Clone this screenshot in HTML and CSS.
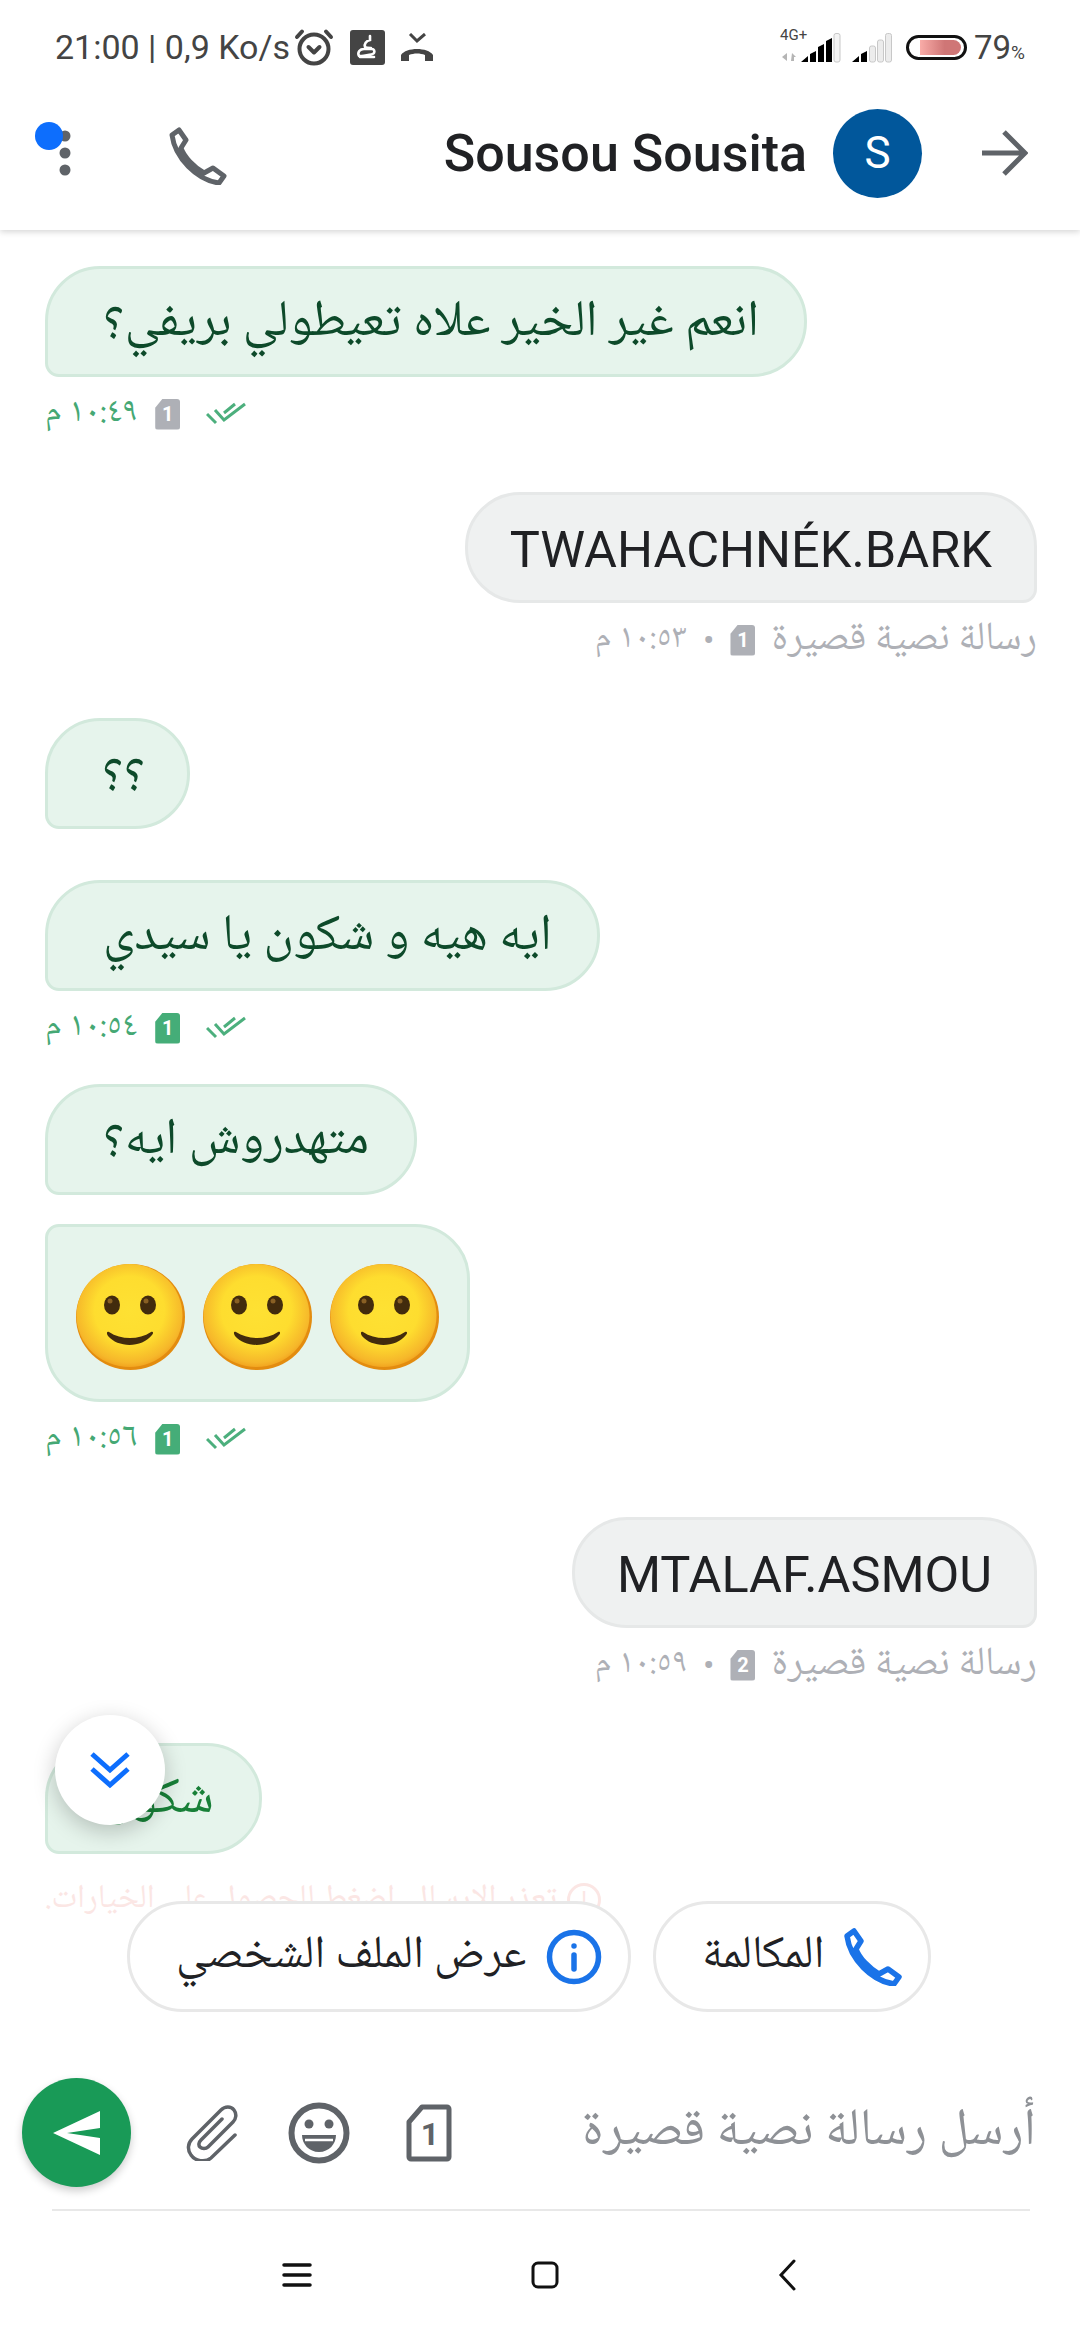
FILE: index.html
```html
<!DOCTYPE html>
<html lang="en">
<head>
    <meta charset="UTF-8">
    <meta name="viewport" content="width=device-width, initial-scale=1.0">
    <title>Sousou Sousita</title>
    <link rel="stylesheet" href="styles.css">
</head>
<body>
<div class="phone">

    <div class="status-bar">
        <span class="clock">21:00 | 0,9 Ko/s</span>
        <svg class="st-alarm" width="42" height="38" viewBox="0 0 42 38" fill="none" stroke="#444" stroke-width="4" stroke-linecap="round" stroke-linejoin="round">
            <circle cx="21" cy="21" r="14.5"/>
            <path d="M4 9 9 3.5M38 9 33 3.5"/>
            <path d="M15.5 19 21 24.5 26.5 19"/>
        </svg>
        <svg class="st-app" width="35" height="35" viewBox="0 0 35 35">
            <rect width="35" height="35" rx="3" fill="#444"/>
            <path d="M20 6v4c-4 1-6 4-5 7 1 1 4 1 6 1M9 26c-2-4 1-7 5-7h8c2 0 3 2 2 4-1 2-8 2-12 3-1 0-2 0-3 0M10 27h14" fill="none" stroke="#fff" stroke-width="2.6" stroke-linecap="round"/>
        </svg>
        <svg class="st-call" width="32" height="29" viewBox="0 0 32 29" fill="none">
            <path d="M9 1 16 8 24 1" stroke="#444" stroke-width="3"/>
            <path d="M0 28v-6c5-8 27-8 32 0v6h-8v-6c-5-2-11-2-16 0v6z" fill="#444"/>
        </svg>
        <span class="status-gap"></span>
        <span class="net">
            <span class="net-label">4G+</span>
            <svg width="60" height="31" viewBox="0 0 60 31">
                <path d="M1 25 6 21v8zM11 21l4 4h-2v4h-3zM8 29v-8" fill="#b5b5b5"/>
                <path d="M20 30l7-6v6zM29 22l6-3v11h-6zM37 15l6-3v18h-6zM45 9l6-3v24h-6z" fill="#000"/>
                <rect x="53" y="1.5" width="6" height="28.5" rx="2" fill="#f4f4f4" stroke="#c8c8c8"/>
            </svg>
        </span>
        <svg class="st-signal" width="43" height="31" viewBox="0 0 43 31">
            <path d="M1 30l7-6v6zM10 22l6-3v11h-6z" fill="#000"/>
            <g fill="#ececec" stroke="#c8c8c8">
                <rect x="18.500" y="14" width="6" height="16" rx="2"/>
                <rect x="26.500" y="8" width="6" height="22" rx="2"/>
                <rect x="34.500" y="1.5" width="6" height="28.5" rx="2"/>
            </g>
        </svg>
        <span class="battery"><span class="battery-fill"></span></span>
        <span class="battery-num">79<small>%</small></span>
    </div>

    <div class="app-bar">
        <svg class="ab-dots" width="52" height="56" viewBox="0 0 52 56">
            <circle cx="30" cy="14" r="5.500" fill="#5f6368"/>
            <circle cx="30" cy="31" r="5.500" fill="#5f6368"/>
            <circle cx="30" cy="48" r="5.500" fill="#5f6368"/>
            <circle cx="14" cy="14" r="14" fill="#0d6efd"/>
        </svg>
        <svg class="ab-phone" width="58" height="58" viewBox="0 0 58 58" fill="none" stroke="#5f6368" stroke-width="5" stroke-linejoin="round">
            <path d="M10 3 17 13 12 21C15 30 25 40 35 46L44 41 55 49 50 56C28 53 6 31 3 8Z"/>
        </svg>
        <span class="title">Sousou Sousita</span>
        <span class="avatar">S</span>
        <svg class="ab-arrow" width="46" height="46" viewBox="0 0 46 46" fill="none" stroke="#5f6368" stroke-width="5">
            <path d="M0 23H43M22 2 43 23 22 44"/>
        </svg>
    </div>

    <div class="thread">
        <div class="bubble in" dir="rtl">انعم غير الخير علاه تعيطولي بريفي؟</div>
        <div class="meta meta-in" dir="rtl">
            <svg class="ticks" width="40" height="24" viewBox="0 0 40 24" fill="none" stroke="#4caf7d" stroke-width="3"><path d="M1 12 10 21M9 8 18 18 39 2M18 11 29 2"/></svg>
            <span class="sim sim-grey">1</span>
            <span class="time">١٠:٤٩ م</span>
        </div>

        <div class="bubble out" dir="ltr">TWAHACHNÉK.BARK</div>
        <div class="meta meta-out" dir="rtl">
            <span>رسالة نصية قصيرة</span>
            <span class="sim sim-grey">1</span>
            <span class="dot">•</span>
            <span class="time">١٠:٥٣ م</span>
        </div>

        <div class="bubble in tight" dir="rtl">؟؟</div>
        <div class="bubble in gap-51" dir="rtl">ايه هيه و شكون يا سيدي</div>
        <div class="meta meta-in" dir="rtl">
            <svg class="ticks" width="40" height="24" viewBox="0 0 40 24" fill="none" stroke="#4caf7d" stroke-width="3"><path d="M1 12 10 21M9 8 18 18 39 2M18 11 29 2"/></svg>
            <span class="sim sim-green">1</span>
            <span class="time">١٠:٥٤ م</span>
        </div>

        <div class="bubble in gap-37" dir="rtl">متهدروش ايه؟</div>
        <div class="bubble in emoji-bubble">
            <svg class="emoji" width="109" height="106" viewBox="0 0 109 106"><use href="#smile"/></svg>
            <svg class="emoji" width="109" height="106" viewBox="0 0 109 106"><use href="#smile"/></svg>
            <svg class="emoji" width="109" height="106" viewBox="0 0 109 106"><use href="#smile"/></svg>
        </div>
        <div class="meta meta-in" dir="rtl">
            <svg class="ticks" width="40" height="24" viewBox="0 0 40 24" fill="none" stroke="#4caf7d" stroke-width="3"><path d="M1 12 10 21M9 8 18 18 39 2M18 11 29 2"/></svg>
            <span class="sim sim-green">1</span>
            <span class="time">١٠:٥٦ م</span>
        </div>

        <div class="bubble out" dir="ltr">MTALAF.ASMOU</div>
        <div class="meta meta-out" dir="rtl">
            <span>رسالة نصية قصيرة</span>
            <span class="sim sim-grey">2</span>
            <span class="dot">•</span>
            <span class="time">١٠:٥٩ م</span>
        </div>

        <div class="bubble in sending" dir="rtl">شكون</div>
        <div class="failed" dir="rtl">
            <span class="failed-icon">!</span>
            <span>تعذر الإرسال. اضغط للحصول على الخيارات.</span>
        </div>

        <div class="scroll-down">
            <svg width="40" height="38" viewBox="0 0 40 38" fill="none" stroke="#0d6efd" stroke-width="5"><path d="M2 3 20 19 38 3M2 18 20 34 38 18"/></svg>
        </div>

        <div class="chips">
            <div class="chip" dir="rtl">
                <svg width="58" height="58" viewBox="0 0 58 58" fill="none" stroke="#1a73e8" stroke-width="5.500" stroke-linejoin="round">
                    <path d="M10 3 17 13 12 21C15 30 25 40 35 46L44 41 55 49 50 56C28 53 6 31 3 8Z"/>
                </svg>
                <span>المكالمة</span>
            </div>
            <div class="chip" dir="rtl">
                <svg width="56" height="56" viewBox="0 0 56 56" fill="none" stroke="#1a73e8" stroke-width="5.500" stroke-linecap="round">
                    <circle cx="28" cy="28" r="24.500"/>
                    <path d="M28 26V40"/>
                    <circle cx="28" cy="17" r="1.500" fill="#1a73e8" stroke-width="2.500"/>
                </svg>
                <span>عرض الملف الشخصي</span>
            </div>
        </div>
    </div>

    <div class="composer">
        <span class="send">
            <svg width="47" height="44" viewBox="0 0 47 44"><path d="M0 22 47 0V17L14 22 47 27V44Z" fill="#fff"/></svg>
        </span>
        <svg class="c-clip" width="52" height="56" viewBox="0 0 52 56" fill="none" stroke="#5f6368" stroke-width="3.500" stroke-linecap="round">
            <path d="M49 30 25 53C19 58 9 56 5 50 1 45 2 38 6 34L35 5C39 1 45 1 48 5 51 9 50 14 47 17L22 42C20 44 16 44 14 42 12 40 13 37 15 35L36 14"/>
        </svg>
        <svg class="c-smile" width="62" height="62" viewBox="0 0 62 62">
            <circle cx="31" cy="31" r="27.500" fill="none" stroke="#5f6368" stroke-width="6"/>
            <circle cx="21" cy="22" r="4.500" fill="#5f6368"/>
            <circle cx="41" cy="22" r="4.500" fill="#5f6368"/>
            <path d="M14 33H48C48 42 41 50 31 50 21 50 14 42 14 33Z" fill="#5f6368"/>
            <path d="M17 38H45" stroke="#fff" stroke-width="2.500"/>
        </svg>
        <svg class="c-sim" width="46" height="58" viewBox="0 0 46 58">
            <path d="M16 3H41C42 3 43 4 43 5V53C43 54 42 55 41 55H5C4 55 3 54 3 53V18Z" fill="none" stroke="#5f6368" stroke-width="5" stroke-linejoin="round"/>
            <text x="24" y="41" class="c-sim-num">1</text>
        </svg>
        <span class="placeholder" dir="rtl">أرسل رسالة نصية قصيرة</span>
    </div>

    <div class="nav-bar">
        <svg width="30" height="24" viewBox="0 0 30 24" stroke="#111" stroke-width="3.500" stroke-linecap="round"><path d="M2 2H28M2 12H28M2 22H28"/></svg>
        <svg width="28" height="28" viewBox="0 0 28 28" fill="none" stroke="#111" stroke-width="3"><rect x="2" y="2" width="24" height="24" rx="5"/></svg>
        <svg width="20" height="32" viewBox="0 0 20 32" fill="none" stroke="#111" stroke-width="3" stroke-linecap="round"><path d="M16 2 3 16 16 30"/></svg>
    </div>

    <svg width="0" height="0" class="defs">
        <defs>
            <radialGradient id="face" cx="50%" cy="45%" r="55%">
                <stop offset="0" stop-color="#fee133"/>
                <stop offset="0.6" stop-color="#fedd2f"/>
                <stop offset="0.92" stop-color="#f6b72a"/>
                <stop offset="1" stop-color="#f2a520"/>
            </radialGradient>
            <g id="smile">
                <ellipse cx="54.500" cy="53" rx="54.500" ry="53" fill="#e38c0f"/>
                <ellipse cx="53.500" cy="51.500" rx="53" ry="51.500" fill="url(#face)"/>
                <ellipse cx="36" cy="41" rx="8" ry="9.500" fill="#422b0d"/>
                <ellipse cx="72" cy="41" rx="8" ry="9.500" fill="#422b0d"/>
                <circle cx="34" cy="37" r="2.500" fill="#896024"/>
                <circle cx="70" cy="37" r="2.500" fill="#896024"/>
                <path d="M33 68C45 76 63 76 75 68 77 67 78 69 76 71 66 84 42 84 32 72 30 69 31 67 33 68Z" fill="#422b0d"/>
            </g>
        </defs>
    </svg>
</div>
</body>
</html>
```

FILE: styles.css
```css
* {
    box-sizing: border-box;
}

body {
    margin: 0;
    background-color: white;
    font-family: Roboto, "Noto Sans", "DejaVu Sans", sans-serif;
    color: #202124;
}

.phone {
    width: 1080px;
    height: 2340px;
    display: flex;
    flex-direction: column;
    overflow: hidden;
}

.defs {
    position: absolute;
}

/* status bar */
.status-bar {
    height: 82px;
    flex: none;
    display: flex;
    align-items: center;
    padding: 12px 55px 0 55px;
    background-color: white;
    color: #444;
    position: relative;
    z-index: 3;
}

.clock {
    font-size: 34px;
    width: 238px;
    white-space: nowrap;
}

.st-app {
    margin-left: 15px;
}

.st-call {
    margin-left: 16px;
}

.status-gap {
    flex: 1;
}

.net {
    position: relative;
    display: flex;
}

.net-label {
    position: absolute;
    left: -1px;
    top: -6px;
    font-size: 15px;
    color: #444;
}

.st-signal {
    margin-left: 10px;
}

.battery {
    width: 61px;
    height: 25px;
    margin-left: 12px;
    border: 3.5px solid #111;
    border-radius: 13px;
    padding: 2px 3px 2px 11px;
    display: flex;
}

.battery-fill {
    flex: 1;
    border-radius: 0 8px 8px 0;
    background: linear-gradient(to right, #f9aca8, #cf7676 60%);
}

.battery-num {
    margin-left: 7px;
    font-size: 33px;
}

.battery-num small {
    font-size: 19px;
}

/* app bar */
.app-bar {
    height: 148px;
    flex: none;
    display: flex;
    align-items: center;
    padding: 0 52px 6px 35px;
    background-color: white;
    box-shadow: 0 2px 6px rgba(0, 0, 0, 0.16);
    position: relative;
    z-index: 2;
}

.ab-dots {
    margin-top: -6px;
}

.ab-phone {
    margin-left: 82px;
    margin-top: 6px;
}

.title {
    margin-left: auto;
    font-size: 52px;
    font-weight: 500;
}

.avatar {
    width: 89px;
    height: 89px;
    margin-left: 26px;
    border-radius: 50%;
    background-color: #01579b;
    color: white;
    font-size: 44px;
    display: flex;
    align-items: center;
    justify-content: center;
}

.ab-arrow {
    margin-left: 60px;
}

/* messages */
.thread {
    flex: 1;
    position: relative;
    display: flex;
    flex-direction: column;
    align-items: flex-start;
    padding: 36px 43px 0 45px;
}

.bubble {
    height: 111px;
    padding: 3px 45px 0 55px;
    border: 3px solid;
    border-radius: 55px;
    display: flex;
    align-items: center;
    font-size: 51px;
    font-family: "Noto Naskh Arabic", "DejaVu Sans", sans-serif;
    white-space: nowrap;
}

.in {
    background-color: #e6f4ec;
    border-color: #d2e9dc;
    color: #0d4a2a;
    border-bottom-left-radius: 14px;
}

.out {
    align-self: flex-end;
    background-color: #eff1f1;
    border-color: #e6e8e8;
    color: #202124;
    font-family: Roboto, sans-serif;
    font-size: 50.5px;
    border-bottom-right-radius: 14px;
    padding: 3px 42px 0 42px;
}

.tight {
    padding: 3px 42px 0 54px;
}

.meta {
    height: 38px;
    margin-top: 18px;
    margin-bottom: 59px;
    display: flex;
    align-items: center;
    font-size: 40px;
    font-family: "Noto Naskh Arabic", "DejaVu Sans", sans-serif;
    white-space: nowrap;
}

.meta-in {
    color: #45a874;
    gap: 18px;
}

.meta-out {
    align-self: flex-end;
    color: #aeb0b6;
    gap: 16px;
}

.time {
    font-size: 34px;
}

.ticks {
    margin-left: 8px;
}

.sim {
    width: 25px;
    height: 31px;
    border-radius: 3px;
    clip-path: polygon(30% 0, 100% 0, 100% 100%, 0 100%, 0 30%);
    color: white;
    font-family: Roboto, sans-serif;
    font-size: 20px;
    font-weight: 700;
    display: flex;
    align-items: center;
    justify-content: center;
}

.sim-grey {
    background-color: #aeb0b6;
}

.sim-green {
    background-color: #45ad78;
}

.dot {
    font-family: Roboto, sans-serif;
    font-size: 34px;
}

.gap-51 {
    margin-top: 51px;
}

.gap-37 {
    margin-top: -22px;
}

.emoji-bubble {
    height: 178px;
    margin-top: 29px;
    padding: 8px 28px 0 28px;
    gap: 18px;
    border-radius: 14px 55px 55px 55px;
}

.sending {
    color: #188038;
}

.failed {
    align-self: flex-start;
    margin-top: 26px;
    width: 556px;
    height: 40px;
    display: flex;
    align-items: center;
    gap: 10px;
    font-size: 33px;
    font-family: "Noto Naskh Arabic", "DejaVu Sans", sans-serif;
    color: #fbe6e4;
    white-space: nowrap;
}

.failed-icon {
    width: 34px;
    height: 34px;
    flex: none;
    border: 3px solid #fbe6e4;
    border-radius: 50%;
    font-size: 22px;
    font-family: Roboto, sans-serif;
    text-align: center;
    line-height: 28px;
}

/* floating over the thread */
.scroll-down {
    position: absolute;
    left: 55px;
    top: 1485px;
    width: 110px;
    height: 110px;
    border-radius: 50%;
    background-color: white;
    box-shadow: 0 6px 22px rgba(0, 0, 0, 0.22);
    display: flex;
    align-items: center;
    justify-content: center;
}

.chips {
    position: absolute;
    left: 127px;
    bottom: 12px;
    display: flex;
    flex-direction: row-reverse;
    gap: 22px;
}

.chip {
    height: 111px;
    padding: 0 26px 0 46px;
    border: 3px solid #e8e8e8;
    border-radius: 56px;
    background-color: white;
    display: flex;
    align-items: center;
    gap: 20px;
    font-size: 46px;
    font-family: "Noto Naskh Arabic", "DejaVu Sans", sans-serif;
    color: #202124;
    white-space: nowrap;
}

/* composer */
.composer {
    height: 185px;
    flex: none;
    background-color: white;
    padding: 32px 44px 0 22px;
    display: flex;
    align-items: center;
}

.send {
    width: 109px;
    height: 109px;
    border-radius: 50%;
    background-color: #199a57;
    box-shadow: 0 4px 8px rgba(0, 0, 0, 0.2);
    display: flex;
    align-items: center;
    justify-content: center;
}

.c-clip {
    margin-left: 55px;
}

.c-smile {
    margin-left: 50px;
}

.c-sim {
    margin-left: 56px;
}

.c-sim-num {
    font-family: Roboto, sans-serif;
    font-size: 32px;
    font-weight: 700;
    fill: #5f6368;
    text-anchor: middle;
}

.placeholder {
    margin-left: auto;
    font-size: 52px;
    font-family: "Noto Naskh Arabic", "DejaVu Sans", sans-serif;
    color: #8e9196;
    white-space: nowrap;
}

/* nav bar */
.nav-bar {
    height: 131px;
    flex: none;
    margin: 0 50px 0 52px;
    border-top: 2px solid #e8e8e8;
    display: flex;
    align-items: center;
    padding: 0 232px 2px 230px;
    justify-content: space-between;
}
```
